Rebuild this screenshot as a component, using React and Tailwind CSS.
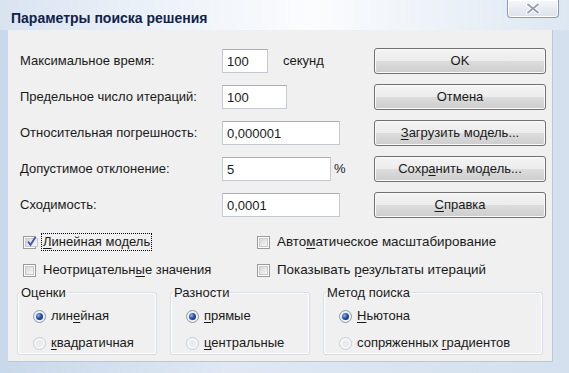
const u = (ch) => <span className="underline underline-offset-2">{ch}</span>;

const Field = ({ label, value, width, suffix }) => (
  <div className="flex items-center h-[26px]">
    <div className="w-[202px]">{label}</div>
    <input
      readOnly
      value={value}
      className={`${width} h-[24px] px-[4px] bg-white border border-[#c5cad2] border-t-[#abadb3] outline-none text-[13px] text-[#1a1a1a]`}
    />
    {suffix}
  </div>
);

const Button = ({ children }) => (
  <div className="h-[26px] w-[172px] flex items-center justify-center rounded-[3px] border border-[#707070] shadow-[inset_0_0_0_1px_#fbfbfb] bg-[linear-gradient(to_bottom,#f4f4f4_0%,#ececec_48%,#dcdcdc_52%,#cdcdcd_100%)]">
    {children}
  </div>
);

const Check = ({ checked }) => (
  <span className="w-[13px] h-[13px] shrink-0 border border-[#9a9a9a] bg-white p-[1px] flex">
    <span className="flex-1 border border-[#c9c9c9] bg-[linear-gradient(135deg,#d8d8d8,#f6f6f6)] flex items-center justify-center">
      {checked && (
        <svg width="11" height="11" viewBox="0 0 11 11" className="-mt-[1px]">
          <path d="M2 5.5 L4.5 9 L9.5 1" fill="none" stroke="#3b57a8" strokeWidth="1.8" />
        </svg>
      )}
    </span>
  </span>
);

const Radio = ({ checked }) => (
  <span
    className={`w-[13px] h-[13px] shrink-0 rounded-full border flex items-center justify-center ${
      checked ? "border-[#8e9aa8] bg-[#eef1f4]" : "border-[#c8ccd0] bg-[#f6f7f8]"
    }`}
  >
    {checked ? (
      <span className="w-[7px] h-[7px] rounded-full bg-[radial-gradient(circle_at_35%_35%,#8fb4f0_0%,#2d4fa8_45%,#0f1f5c_100%)]" />
    ) : (
      <span className="w-[7px] h-[7px] rounded-full bg-[#e9ebee]" />
    )}
  </span>
);

const Group = ({ title, width, children }) => (
  <fieldset className={`${width} h-[70px] border border-[#d5dfe5] rounded-[3px] shadow-[inset_0_0_0_1px_#ffffff]`}>
    <legend className="ml-[2px] px-[1px] leading-[15px]">{title}</legend>
    <div className="flex flex-col gap-[9px] pl-[15px] pt-[7px]">{children}</div>
  </fieldset>
);

const RadioRow = ({ checked, children }) => (
  <div className="flex items-center h-[18px] gap-[5px]">
    <Radio checked={checked} />
    <span>{children}</span>
  </div>
);

export default function App() {
  return (
    <div
      className="w-[569px] h-[373px] overflow-hidden flex flex-col bg-[linear-gradient(to_right,#c9d8ea,#dfe8f3_40%,#d4e0ee)] text-[13px] text-[#1a1a1a]"
      style={{ fontFamily: '"Liberation Sans", Arial, sans-serif' }}
    >
      <div className="h-[30px] shrink-0 flex items-start bg-[linear-gradient(to_right,#d9e4f1_0%,#eef3f9_30%,#fbfcfe_55%,#eef3f9_75%,#dde7f2_100%)]">
        <div className="pl-[11px] pt-[8px] font-bold text-[14px] text-[#12224a]">
          Параметры поиска решения
        </div>
        <div className="ml-[auto] mr-[10px] w-[52px] h-[18px] rounded-b-[4px] border border-t-0 border-[#8d9bb0] bg-[linear-gradient(to_bottom,#f5f7fa,#dce2ea)] shadow-[inset_0_0_0_1px_#ffffff] flex items-center justify-center">
          <svg width="16" height="11" viewBox="0 0 16 11">
            <path d="M3 1.5 L13 9.5 M13 1.5 L3 9.5" stroke="#ffffff" strokeWidth="4" strokeLinecap="round" />
            <path d="M3 1.5 L13 9.5 M13 1.5 L3 9.5" stroke="#9aa3ad" strokeWidth="2" strokeLinecap="round" />
          </svg>
        </div>
      </div>

      <div className="ml-[8px] w-[545px] h-[332px] bg-[#f0f0f0] border-b border-r border-[#b9c7d8] flex flex-col">
        <div className="flex pt-[18px] pl-[12px] pr-[6px]">
          <div className="flex flex-col gap-[10px]">
            <Field
              label="Максимальное время:"
              value="100"
              width="w-[46px]"
              suffix={<span className="ml-[15px]">секунд</span>}
            />
            <Field label="Предельное число итераций:" value="100" width="w-[65px]" />
            <Field label="Относительная погрешность:" value="0,000001" width="w-[118px]" />
            <Field
              label="Допустимое отклонение:"
              value="5"
              width="w-[109px]"
              suffix={<span className="ml-[3px]">%</span>}
            />
            <Field label="Сходимость:" value="0,0001" width="w-[118px]" />
          </div>
          <div className="ml-auto flex flex-col gap-[10px]">
            <Button>OK</Button>
            <Button>Отмена</Button>
            <Button>{u("З")}агрузить модель...</Button>
            <Button>Сохр{u("а")}нить модель...</Button>
            <Button>{u("С")}правка</Button>
          </div>
        </div>

        <div className="mt-[14px] pl-[15px] grid grid-cols-[234px_1fr] gap-y-[8px]">
          <div className="flex items-center h-[20px] gap-[5px]">
            <Check checked />
            <span className="border border-dotted border-black px-[1px] leading-[16px]">
              {u("Л")}инейная модель
            </span>
          </div>
          <div className="flex items-center h-[20px] gap-[7px]">
            <Check />
            <span className="text-[13.4px]">Авто{u("м")}атическое масштабирование</span>
          </div>
          <div className="flex items-center h-[20px] gap-[7px]">
            <Check />
            <span>Неотрицательн{u("ы")}е значения</span>
          </div>
          <div className="flex items-center h-[20px] gap-[7px]">
            <Check />
            <span className="text-[13.4px]">Показывать {u("р")}езультаты итераций</span>
          </div>
        </div>

        <div className="mt-[5px] pl-[9px] flex gap-[13px]">
          <Group title="Оценки" width="w-[140px]">
            <RadioRow checked>лин{u("е")}йная</RadioRow>
            <RadioRow>{u("к")}вадратичная</RadioRow>
          </Group>
          <Group title="Разности" width="w-[140px]">
            <RadioRow checked>{u("п")}рямые</RadioRow>
            <RadioRow>{u("ц")}ентральные</RadioRow>
          </Group>
          <Group title="Метод поиска" width="w-[220px]">
            <RadioRow checked>{u("Н")}ьютона</RadioRow>
            <RadioRow>сопряженных {u("г")}радиентов</RadioRow>
          </Group>
        </div>
      </div>
    </div>
  );
}
